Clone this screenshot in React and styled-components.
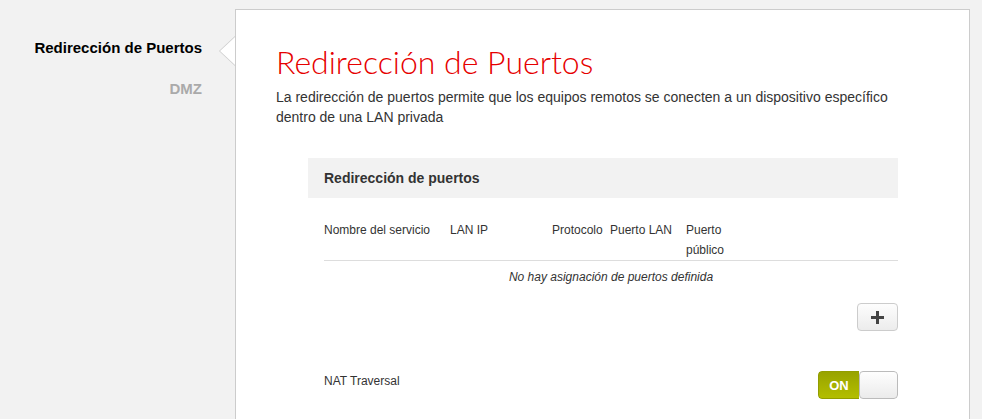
import React from "react";
import styled, { createGlobalStyle } from "styled-components";

const Global = createGlobalStyle`
  html, body { margin: 0; padding: 0; }
  body {
    background: #f2f2f2;
    font-family: "Liberation Sans", Arial, sans-serif;
    color: #333;
    overflow: hidden;
  }
`;

const Page = styled.div`
  display: flex;
  align-items: flex-start;
  padding-top: 9px;
  min-height: 410px;
`;

const Sidebar = styled.nav`
  width: 235px;
  flex: none;
  display: flex;
  flex-direction: column;
  align-items: flex-end;
  padding: 29px 33px 0 0;
  box-sizing: border-box;
`;

const NavItem = styled.div`
  font-size: 15px;
  font-weight: bold;
  line-height: 20px;
  height: 41px;
  color: ${(p) => (p.$active ? "#000" : "#aaa")};
`;

const Panel = styled.main`
  position: relative;
  width: 735px;
  min-height: 430px;
  box-sizing: border-box;
  background: #fff;
  border: 1px solid #ccc;
  border-bottom: none;
  padding: 31px 71px 0 40px;
`;

const Notch = styled.span`
  position: absolute;
  top: 26px;
  left: -17px;
  width: 0;
  height: 0;
  border-top: 15px solid transparent;
  border-bottom: 15px solid transparent;
  border-right: 16px solid #ccc;
  &::after {
    content: "";
    position: absolute;
    top: -14px;
    left: 1px;
    border-top: 14px solid transparent;
    border-bottom: 14px solid transparent;
    border-right: 15px solid #fff;
  }
`;

const Title = styled.h1`
  margin: 0;
  font-family: Lato, "Open Sans", sans-serif;
  font-weight: 300;
  font-size: 32px;
  line-height: 42px;
  color: #e60000;
`;

const Description = styled.p`
  margin: 4px 0 0;
  font-size: 14px;
  line-height: 20px;
  color: #333;
`;

const Section = styled.section`
  margin: 31px 0 0 32px;
`;

const SectionHeader = styled.div`
  height: 40px;
  background: #f2f2f2;
  padding-left: 16px;
  display: flex;
  align-items: center;
  font-size: 14px;
  font-weight: bold;
  color: #333;
`;

const SectionBody = styled.div`
  padding-left: 16px;
`;

const TableHead = styled.div`
  display: grid;
  grid-template-columns: 126px 102px 58px 76px 60px 1fr;
  margin-top: 23px;
  border-bottom: 1px solid #ddd;
  font-size: 12px;
  line-height: 19.5px;
  color: #333;
`;

const HeadCell = styled.div``;

const EmptyRow = styled.div`
  text-align: center;
  font-size: 12px;
  font-style: italic;
  line-height: 20px;
  padding-top: 6px;
  color: #333;
`;

const Actions = styled.div`
  display: flex;
  justify-content: flex-end;
  margin-top: 16px;
`;

const IconButton = styled.button`
  width: 41px;
  height: 28px;
  padding: 0;
  border: 1px solid #ccc;
  border-radius: 4px;
  background: linear-gradient(#fdfdfd, #ececec);
  display: flex;
  align-items: center;
  justify-content: center;
  cursor: pointer;
`;

const SettingRow = styled.div`
  display: flex;
  justify-content: space-between;
  align-items: flex-start;
  margin-top: 40px;
`;

const SettingLabel = styled.div`
  font-size: 12px;
  line-height: 20px;
  color: #333;
`;

const Toggle = styled.div`
  display: flex;
  width: 80px;
  height: 28px;
  box-sizing: border-box;
  border-radius: 4px;
  overflow: hidden;
`;

const ToggleOn = styled.div`
  width: 40px;
  background: linear-gradient(#98a300, #b3be00);
  border: 1px solid #929d00;
  border-right: none;
  border-radius: 4px 0 0 4px;
  color: #fff;
  font-size: 13px;
  font-weight: bold;
  display: flex;
  align-items: center;
  justify-content: center;
`;

const ToggleKnob = styled.div`
  flex: 1;
  background: linear-gradient(#fefefe, #ebebeb);
  border: 1px solid #bbb;
  border-radius: 4px;
`;

export default function App() {
  return (
    <>
      <Global />
      <Page>
        <Sidebar>
          <NavItem $active>Redirección de Puertos</NavItem>
          <NavItem>DMZ</NavItem>
        </Sidebar>
        <Panel>
          <Notch />
          <Title>Redirección de Puertos</Title>
          <Description>
            La redirección de puertos permite que los equipos remotos se conecten a un dispositivo específico dentro de una LAN privada
          </Description>
          <Section>
            <SectionHeader>Redirección de puertos</SectionHeader>
            <SectionBody>
              <TableHead>
                <HeadCell>Nombre del servicio</HeadCell>
                <HeadCell>LAN IP</HeadCell>
                <HeadCell>Protocolo</HeadCell>
                <HeadCell>Puerto LAN</HeadCell>
                <HeadCell>Puerto público</HeadCell>
                <HeadCell />
              </TableHead>
              <EmptyRow>No hay asignación de puertos definida</EmptyRow>
              <Actions>
                <IconButton aria-label="Añadir">
                  <svg width="13" height="13" viewBox="0 0 13 13">
                    <path d="M5 0h3v5h5v3H8v5H5V8H0V5h5z" fill="#444" />
                  </svg>
                </IconButton>
              </Actions>
              <SettingRow>
                <SettingLabel>NAT Traversal</SettingLabel>
                <Toggle>
                  <ToggleOn>ON</ToggleOn>
                  <ToggleKnob />
                </Toggle>
              </SettingRow>
            </SectionBody>
          </Section>
        </Panel>
      </Page>
    </>
  );
}
